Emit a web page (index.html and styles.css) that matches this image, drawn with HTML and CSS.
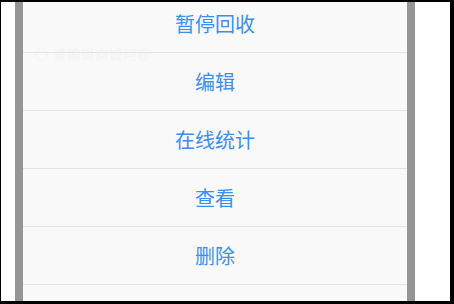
FILE: index.html
```html
<!DOCTYPE html>
<html lang="zh-CN">
<head>
    <meta charset="UTF-8">
    <meta name="viewport" content="width=device-width, initial-scale=1.0">
    <title>问卷操作</title>
    <link rel="stylesheet" href="styles.css">
</head>
<body>
    <div class="screen">
        <div class="frame">
            <div class="sheet">
                <div class="ghost">○ 请编辑商城问卷</div>
                <ul class="actions">
                    <li class="action">暂停回收</li>
                    <li class="action">编辑</li>
                    <li class="action">在线统计</li>
                    <li class="action">查看</li>
                    <li class="action">删除</li>
                </ul>
            </div>
        </div>
    </div>
</body>
</html>
```

FILE: styles.css
```css
body {
    margin: 0;
    padding: 0;
    background: #000;
    font-family: "Noto Sans CJK SC", "Noto Sans", sans-serif;
    block-size: 304px;
    overflow: hidden;
}

.screen {
    margin: 2px 4px 3px 1px;
    block-size: 299px;
    background: #fff;
    padding-inline-start: 14px;
    padding-inline-end: 35px;
    display: flex;
}

.frame {
    flex: 1;
    background: #959595;
    padding: 0 8px;
    display: flex;
}

.sheet {
    flex: 1;
    background: #f9f9f9;
    overflow: hidden;
    position: relative;
}

/* faint text from the page under the sheet */
.ghost {
    position: absolute;
    inset-block-start: 42px;
    inset-inline-start: 12px;
    font-size: 13px;
    color: #f3f3f3;
    letter-spacing: 1px;
}

.actions {
    list-style: none;
    margin: -7px 0 0;
    padding: 0;
    position: relative;
}

.action {
    block-size: 57px;
    border-block-end: 1px solid #e3e3e3;
    display: flex;
    align-items: center;
    justify-content: center;
    font-size: 20px;
    color: #3a8ef0;
}
```
